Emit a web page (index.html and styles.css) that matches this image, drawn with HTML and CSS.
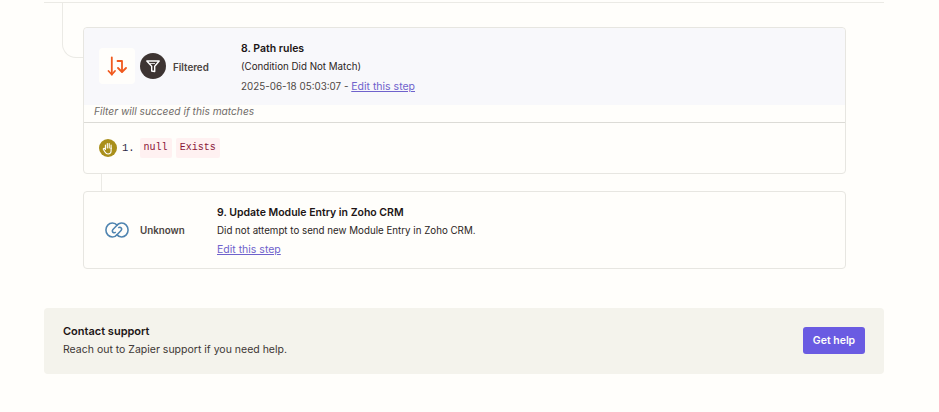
FILE: index.html
```html
<!DOCTYPE html>
<html lang="en">
<head>
<meta charset="utf-8">
<title>Zap run</title>
<link rel="stylesheet" href="styles.css">
</head>
<body>
<main class="page">
  <div class="branch">
    <div class="branch-curve"></div>
    <section class="card">
      <div class="step-head">
        <div class="app-tile">
          <svg width="20" height="20" viewBox="0 0 20 20" fill="none" stroke="#f0591e" stroke-width="1.800" stroke-linecap="round" stroke-linejoin="round"><path d="M4.800 1.500V18.500"/><path d="M1.500 15L4.800 18.500 8 15"/><path d="M10.500 5H15V15.500"/><path d="M11 12L15 16 19 12"/></svg>
        </div>
        <div class="status-badge">
          <svg width="16" height="16" viewBox="0 0 16 16" fill="none" stroke="#fff" stroke-width="1.400" stroke-linejoin="round"><path d="M1.800 3H14.200L9.700 8.200V13.500L6.700 13V8.200Z"/><path d="M4.500 5.500H10" stroke-width="0.800"/></svg>
        </div>
        <span class="status-label filtered">Filtered</span>
        <div class="step-text">
          <h2 class="step-title">8. Path rules</h2>
          <p class="step-line">(Condition Did Not Match)</p>
          <p class="step-line muted">2025-06-18 05:03:07 - <a class="link" href="#">Edit this step</a></p>
        </div>
      </div>
      <p class="filter-note">Filter will succeed if this matches</p>
      <div class="rule">
        <span class="hand">
          <svg width="12" height="13" viewBox="0 0 12 13" fill="none" stroke="#fff" stroke-width="1.100" stroke-linecap="round" stroke-linejoin="round"><path d="M3.400 7V3M5.300 6V1.600M7.200 6V1.600M9.100 6.500V3"/><path d="M9.100 6V8.800C9.100 10.800 7.800 12 6 12 4.500 12 3.700 11.200 3 10L1.300 7.300C1 6.500 2 5.900 2.600 6.500L3.400 7.500"/></svg>
        </span>
        <span class="rule-num">1.</span>
        <code class="chip">null</code>
        <code class="chip">Exists</code>
      </div>
    </section>
    <div class="link-line"></div>
    <section class="card">
      <div class="step-head plain">
        <div class="app-logo">
          <svg width="24" height="16" viewBox="0 0 26 16" preserveAspectRatio="none" fill="none" stroke="#4f84b0" stroke-width="1.700"><path d="M13.500 3.600C12 1.900 10.300 1 8 1 4 1 1 4.100 1 8S4 15 8 15C10.600 15 12.300 13.800 13.800 12L17.400 8.500C18.600 7.300 18 5.600 16.500 5.300 15.700 5.100 15 5.400 14.400 6"/><path d="M12.500 12.400C14 14.100 15.700 15 18 15 22 15 25 11.900 25 8S22 1 18 1C15.400 1 13.700 2.200 12.200 4L8.600 7.500C7.400 8.700 8 10.400 9.500 10.700 10.300 10.900 11 10.600 11.600 10"/></svg>
        </div>
        <span class="status-label unknown">Unknown</span>
        <div class="step-text">
          <h2 class="step-title">9. Update Module Entry in Zoho CRM</h2>
          <p class="step-line">Did not attempt to send new Module Entry in Zoho CRM.</p>
          <p class="step-line"><a class="link" href="#">Edit this step</a></p>
        </div>
      </div>
    </section>
  </div>
  <section class="support">
    <div>
      <h3 class="support-title">Contact support</h3>
      <p class="support-text">Reach out to Zapier support if you need help.</p>
    </div>
    <a class="help-btn" href="#">Get help</a>
  </section>
</main>
</body>
</html>
```
FILE: styles.css
```css
* { box-sizing: border-box; }
html, body { margin: 0; padding: 0; }
body {
  background: #fffefb;
  color: #201515;
  font-family: Inter, "Liberation Sans", sans-serif;
  height: 412px;
  overflow: hidden;
}
.page { width: 840px; margin-left: 44px; padding-top: 2px; }
.branch {
  position: relative;
  border-top: 1px solid #ebeae5;
  padding: 24px 38px 0 39px;
}
.branch-curve {
  position: absolute;
  left: 18px;
  top: 0;
  width: 21px;
  height: 55px;
  border-left: 1px solid #ebeae5;
  border-bottom: 1px solid #ebeae5;
  border-bottom-left-radius: 14px;
}
.card {
  border: 1px solid #e7e6e1;
  border-radius: 4px;
  background: #fffefb;
}
.step-head {
  display: flex;
  align-items: center;
  height: 77px;
  padding-left: 15px;
  background: #f8f8fb;
  border-radius: 4px 4px 0 0;
}
.step-head.plain { background: transparent; padding-left: 21px; height: 76px; }
.app-tile {
  width: 36px;
  height: 36px;
  background: #fffefb;
  border-radius: 4px;
  display: flex;
  align-items: center;
  justify-content: center;
  margin-top: -1px;
}
.status-badge {
  width: 26px;
  height: 26px;
  margin-left: 5px;
  border-radius: 50%;
  background: #3d3432;
  display: flex;
  align-items: center;
  justify-content: center;
  margin-top: -1px;
}
.status-label {
  font-size: 9.800px;
  font-weight: 600;
  color: #4b4441;
  line-height: 14px;
  margin-top: 2px;
}
.filtered { margin-left: 7px; width: 68px; }
.unknown { margin-left: 9px; width: 77px; }
.app-logo { width: 26px; height: 16px; display: flex; }
.step-text { display: flex; flex-direction: column; gap: 4.500px; margin-top: 2px; }
.step-title {
  margin: 0;
  font-size: 10.500px;
  font-weight: 600;
  line-height: 14px;
  color: #201515;
}
.step-line {
  margin: 0;
  font-size: 9.750px;
  line-height: 14px;
  color: #2b2523;
}
.step-line.muted { color: #4f4845; font-size: 9.850px; }
.link { color: #6f62cc; text-decoration: underline; font-size: 10.500px; }
.filter-note {
  margin: 0;
  height: 18px;
  padding-left: 10px;
  border-bottom: 1px solid #dcdbd6;
  font-size: 10.200px;
  font-style: italic;
  line-height: 12px;
  color: #716c69;
}
.rule {
  display: flex;
  align-items: center;
  height: 50px;
  padding-left: 15px;
}
.hand {
  width: 18px;
  height: 18px;
  border-radius: 50%;
  background: #a98f1b;
  display: flex;
  align-items: center;
  justify-content: center;
}
.rule-num {
  margin-left: 5px;
  margin-right: 5px;
  font-family: "Liberation Mono", monospace;
  font-size: 10.500px;
  color: #2d2a45;
}
.chip {
  margin-right: 4px;
  padding: 3px 4px;
  background: #fff1f1;
  border-radius: 2px;
  font-family: "Liberation Mono", monospace;
  font-size: 10px;
  line-height: 14px;
  color: #8a1538;
}
.link-line { width: 1px; height: 17px; margin-left: 18px; background: #ebeae5; }
.support {
  display: flex;
  align-items: center;
  justify-content: space-between;
  height: 66px;
  margin-top: 39px;
  padding: 0 19px;
  background: #f4f3ec;
  border-radius: 4px;
}
.support-title {
  margin: -1px 0 0;
  font-size: 11px;
  font-weight: 600;
  line-height: 16px;
  color: #201515;
}
.support-text {
  margin: 3px 0 0;
  font-size: 10.500px;
  line-height: 16px;
  color: #3d3634;
}
.help-btn {
  width: 62px;
  height: 27px;
  margin-top: -1px;
  line-height: 27px;
  text-align: center;
  background: #6a5be2;
  border-radius: 3px;
  color: #fffefb;
  font-size: 10.500px;
  font-weight: 600;
  text-decoration: none;
}
```
